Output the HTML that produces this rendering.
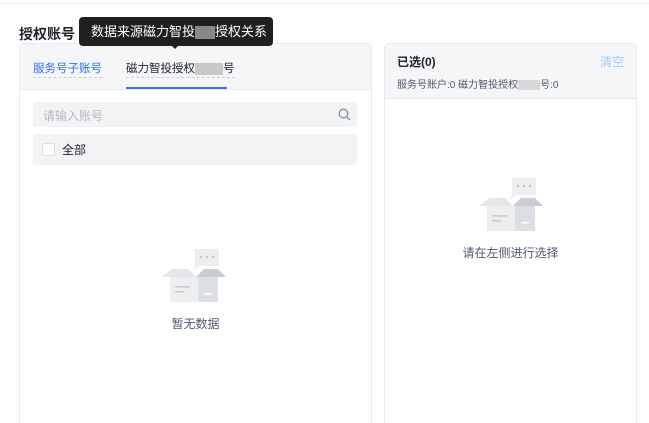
<!DOCTYPE html>
<html><head><meta charset="utf-8"><style>
*{margin:0;padding:0;box-sizing:border-box}
body{width:649px;height:423px;background:#fff;font-family:"Liberation Sans","Noto Sans CJK SC",sans-serif;position:relative;overflow:hidden;color:#1d2129}
.a{position:absolute}
.panel{position:absolute;border:1px solid #e8e9eb;border-bottom:none;border-radius:4px 4px 0 0;background:#fff}
.hd{background:#f5f6f7;border-bottom:1px solid #e8e9eb}
.blur{display:inline-block;background:#c8c8c8;height:13px;vertical-align:middle}
</style></head><body>
<div class="a" style="left:0;top:3px;width:649px;height:1px;background:#f0f0f0"></div>
<div class="a" style="left:19px;top:24px;font-size:14px;font-weight:bold">授权账号</div>

<div class="panel" style="left:19px;top:43px;width:353px;height:380px">
  <div class="hd" style="height:46px;position:relative">
    <div class="a" style="left:13px;top:17px;font-size:11.5px;color:#3370ff;border-bottom:1px dashed #c9cdd4;line-height:16px">服务号子账号</div>
    <div class="a" style="left:106px;top:17px;font-size:11.5px;color:#1d2129;border-bottom:1px dashed #c9cdd4;line-height:16px">磁力智投授权<span class="blur" style="width:28px;height:12px"></span>号</div>
    <div class="a" style="left:106px;top:43px;width:101px;height:2px;background:#3370ff"></div>
  </div>
  <div class="a" style="left:13px;top:58px;width:324px;height:25px;background:#f2f3f5;border-radius:3px">
    <span class="a" style="left:10px;top:5px;font-size:12px;color:#b5b9bf">请输入账号</span>
    <svg class="a" style="left:305px;top:6px" width="13" height="13" viewBox="0 0 13 13"><circle cx="5.5" cy="5.5" r="4.3" fill="none" stroke="#86909c" stroke-width="1.3"/><path d="M8.7 8.7L12 12" stroke="#86909c" stroke-width="1.3"/></svg>
  </div>
  <div class="a" style="left:13px;top:90px;width:324px;height:31px;background:#f2f3f5;border-radius:3px">
    <span class="a" style="left:9px;top:9px;width:13px;height:13px;background:#fff;border:1px solid #dcdfe4;border-radius:2px"></span>
    <span class="a" style="left:29px;top:7px;font-size:12px">全部</span>
  </div>
  <svg class="a" style="left:142px;top:205px" width="64" height="56" viewBox="0 0 64 56"><rect x="33" y="0" width="24" height="17" fill="#eceef0"/><path d="M33 17l-3 5 7-5z" fill="#eceef0"/><circle cx="39" cy="8" r="1.3" fill="#c2c5ca"/><circle cx="45" cy="8" r="1.3" fill="#c2c5ca"/><circle cx="51" cy="8" r="1.3" fill="#c2c5ca"/><path d="M0 28l10-8h16l8 8z" fill="#e4e6e9"/><path d="M34 28l8-8h14l8 8z" fill="#c9ccd0"/><rect x="8" y="28" width="28" height="25" fill="#eceef0"/><rect x="36" y="28" width="20" height="25" fill="#dcdfe3"/><rect x="13" y="37" width="15" height="1.6" fill="#c9ccd0"/><rect x="13" y="42" width="9" height="1.6" fill="#c9ccd0"/><rect x="42" y="44" width="8" height="1.6" fill="#fff"/></svg>
  <div class="a" style="left:0;width:351px;top:271px;text-align:center;font-size:12px;color:#4e5969">暂无数据</div>
</div>

<div class="panel" style="left:384px;top:43px;width:253px;height:380px">
  <div class="hd" style="height:55px;position:relative">
    <div class="a" style="left:12px;top:9px;font-size:12px;font-weight:bold">已选(0)</div>
    <div class="a" style="left:215px;top:9px;font-size:12px;color:#a9c6ff">清空</div>
    <div class="a" style="left:12px;top:32px;font-size:10px;color:#4e5969">服务号账户:0 磁力智投授权<span class="blur" style="width:22px;height:10px;background:#d8d8d8"></span>号:0</div>
  </div>
  <svg class="a" style="left:94px;top:134px" width="64" height="56" viewBox="0 0 64 56"><rect x="33" y="0" width="24" height="17" fill="#eceef0"/><path d="M33 17l-3 5 7-5z" fill="#eceef0"/><circle cx="39" cy="8" r="1.3" fill="#c2c5ca"/><circle cx="45" cy="8" r="1.3" fill="#c2c5ca"/><circle cx="51" cy="8" r="1.3" fill="#c2c5ca"/><path d="M0 28l10-8h16l8 8z" fill="#e4e6e9"/><path d="M34 28l8-8h14l8 8z" fill="#c9ccd0"/><rect x="8" y="28" width="28" height="25" fill="#eceef0"/><rect x="36" y="28" width="20" height="25" fill="#dcdfe3"/><rect x="13" y="37" width="15" height="1.6" fill="#c9ccd0"/><rect x="13" y="42" width="9" height="1.6" fill="#c9ccd0"/><rect x="42" y="44" width="8" height="1.6" fill="#fff"/></svg>
  <div class="a" style="left:0;width:251px;top:200px;text-align:center;font-size:12px;color:#4e5969">请在左侧进行选择</div>
</div>

<div class="a" style="left:79px;top:17px;width:194px;height:29px;background:#1f1f1f;border-radius:4px;color:#fff;font-size:13px;line-height:29px;padding-left:12px;white-space:nowrap;overflow:hidden">数据来源磁力智投<span class="blur" style="width:20px;background:#888"></span>授权关系</div>
<div class="a" style="left:171px;top:45px;width:0;height:0;border-left:4px solid transparent;border-right:4px solid transparent;border-top:4px solid #1f1f1f"></div>
</body></html>
